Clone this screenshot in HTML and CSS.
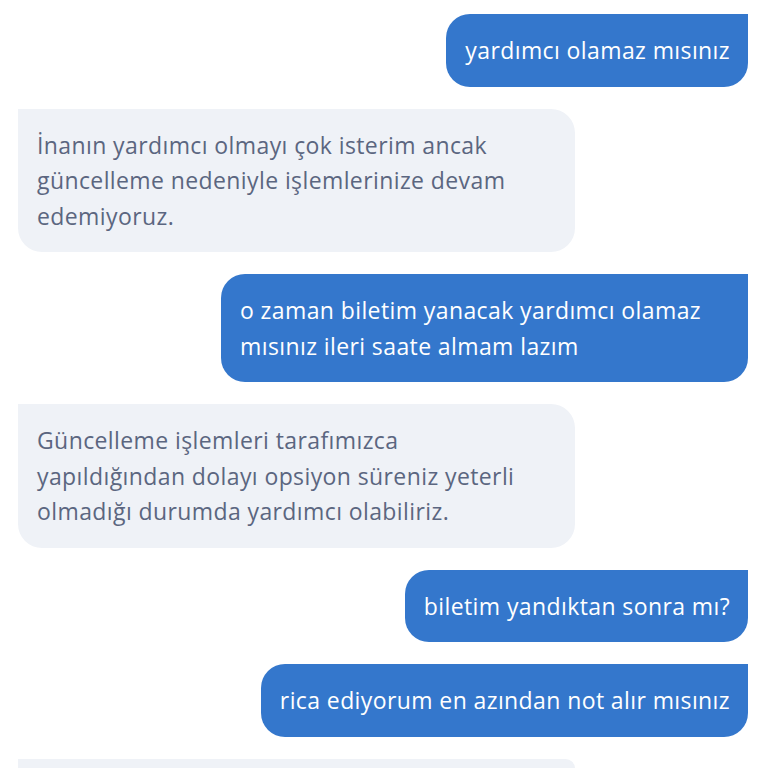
FILE: index.html
```html
<!DOCTYPE html>
<html lang="tr">
<head>
  <meta charset="UTF-8" />
  <title>Sohbet</title>
  <link rel="stylesheet" href="styles.css">
</head>
<body>
  <div class="chat">
    <div class="msg sent">yardımcı olamaz mısınız</div>
    <div class="msg recv">İnanın yardımcı olmayı çok isterim ancak güncelleme nedeniyle işlemlerinize devam edemiyoruz.</div>
    <div class="msg sent">o zaman biletim yanacak yardımcı olamaz mısınız ileri saate almam lazım</div>
    <div class="msg recv">Güncelleme işlemleri tarafımızca yapıldığından dolayı opsiyon süreniz yeterli olmadığı durumda yardımcı olabiliriz.</div>
    <div class="msg sent">biletim yandıktan sonra mı?</div>
    <div class="msg sent">rica ediyorum en azından not alır mısınız</div>
    <div class="msg recv tail">&nbsp;</div>
  </div>
</body>
</html>
```

FILE: styles.css
```css
body {
  margin: 0;
  background: #ffffff;
  font-family: 'Open Sans', 'Noto Sans', sans-serif;
  height: 768px;
  overflow: hidden;
}

.chat {
  display: flex;
  flex-direction: column;
  gap: 22px;
  padding: 14px 20px 0 18px;
}

.msg {
  font-size: 23px;
  line-height: 35.5px;
  letter-spacing: 0.4px;
  padding: 19px 18px 18px 19px;
  border-radius: 24px;
}

.sent {
  align-self: flex-end;
  max-width: 490px;
  background: #3477cc;
  color: #ffffff;
  border-top-right-radius: 0;
}

.recv {
  align-self: flex-start;
  width: 505px;
  padding-right: 33px;
  background: #eff2f7;
  color: #5b6680;
  border-top-left-radius: 0;
}

.tail {
  height: 0;
  padding-bottom: 0;
}
```
